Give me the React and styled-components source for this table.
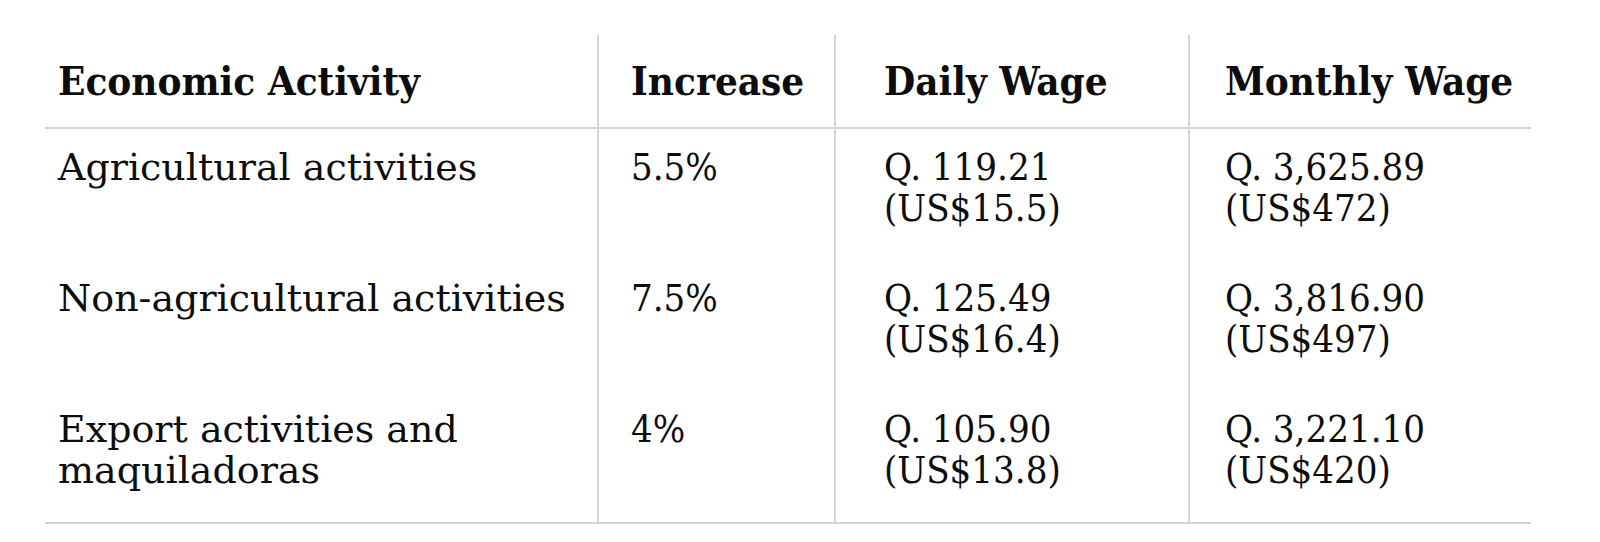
import React from 'react';
import styled, { createGlobalStyle } from 'styled-components';

const GlobalStyle = createGlobalStyle`
    body {
        margin: 0;
        background: #fff;
        font-family: "DejaVu Serif", "Liberation Serif", serif;
        color: #0d0d0d;
    }
`;

const Page = styled.main`
    padding: 35px 0 0 45px;
`;

const WageTable = styled.table`
    width: 1486px;
    table-layout: fixed;
    border-collapse: collapse;
    border-bottom: 2px solid #d4d4d4;
`;

const HeadCell = styled.th`
    text-align: left;
    font-weight: 700;
    font-size: 40px;
    font-stretch: condensed;
    line-height: 41.5px;
    padding: 25px 10px 25px ${({ $indent }) => $indent}px;
    border-bottom: 2px solid #d4d4d4;
    border-left: ${({ $divider }) => ($divider ? '2px solid #d4d4d4' : 'none')};
    white-space: nowrap;
`;

const Cell = styled.td`
    vertical-align: top;
    font-size: 38px;
    font-stretch: ${({ $narrow }) => ($narrow ? 'condensed' : 'normal')};
    line-height: 41.5px;
    padding: 18px 10px 30px ${({ $indent }) => $indent}px;
    border-left: ${({ $divider }) => ($divider ? '2px solid #d4d4d4' : 'none')};
`;

const Line = styled.span`
    display: block;
`;

const columns = [
    { title: 'Economic Activity', width: 553, indent: 13 },
    { title: 'Increase', width: 237, indent: 32 },
    { title: 'Daily Wage', width: 354, indent: 48 },
    { title: 'Monthly Wage', width: 342, indent: 35 },
];

const rows = [
    {
        activity: 'Agricultural activities',
        increase: '5.5%',
        daily: ['Q. 119.21', '(US$15.5)'],
        monthly: ['Q. 3,625.89', '(US$472)'],
    },
    {
        activity: 'Non-agricultural activities',
        increase: '7.5%',
        daily: ['Q. 125.49', '(US$16.4)'],
        monthly: ['Q. 3,816.90', '(US$497)'],
    },
    {
        activity: 'Export activities and maquiladoras',
        increase: '4%',
        daily: ['Q. 105.90', '(US$13.8)'],
        monthly: ['Q. 3,221.10', '(US$420)'],
    },
];

const App = () => {
    return (
        <>
            <GlobalStyle />
            <Page>
                <WageTable>
                    <colgroup>
                        {columns.map(col => (
                            <col key={col.title} style={{ width: col.width }} />
                        ))}
                    </colgroup>
                    <thead>
                        <tr>
                            {columns.map((col, i) => (
                                <HeadCell key={col.title} $indent={col.indent} $divider={i > 0}>
                                    {col.title}
                                </HeadCell>
                            ))}
                        </tr>
                    </thead>
                    <tbody>
                        {rows.map(row => (
                            <tr key={row.activity}>
                                <Cell $indent={columns[0].indent}>{row.activity}</Cell>
                                <Cell $indent={columns[1].indent} $divider $narrow>
                                    {row.increase}
                                </Cell>
                                <Cell $indent={columns[2].indent} $divider $narrow>
                                    {row.daily.map(t => (
                                        <Line key={t}>{t}</Line>
                                    ))}
                                </Cell>
                                <Cell $indent={columns[3].indent} $divider $narrow>
                                    {row.monthly.map(t => (
                                        <Line key={t}>{t}</Line>
                                    ))}
                                </Cell>
                            </tr>
                        ))}
                    </tbody>
                </WageTable>
            </Page>
        </>
    );
};

export default App;
